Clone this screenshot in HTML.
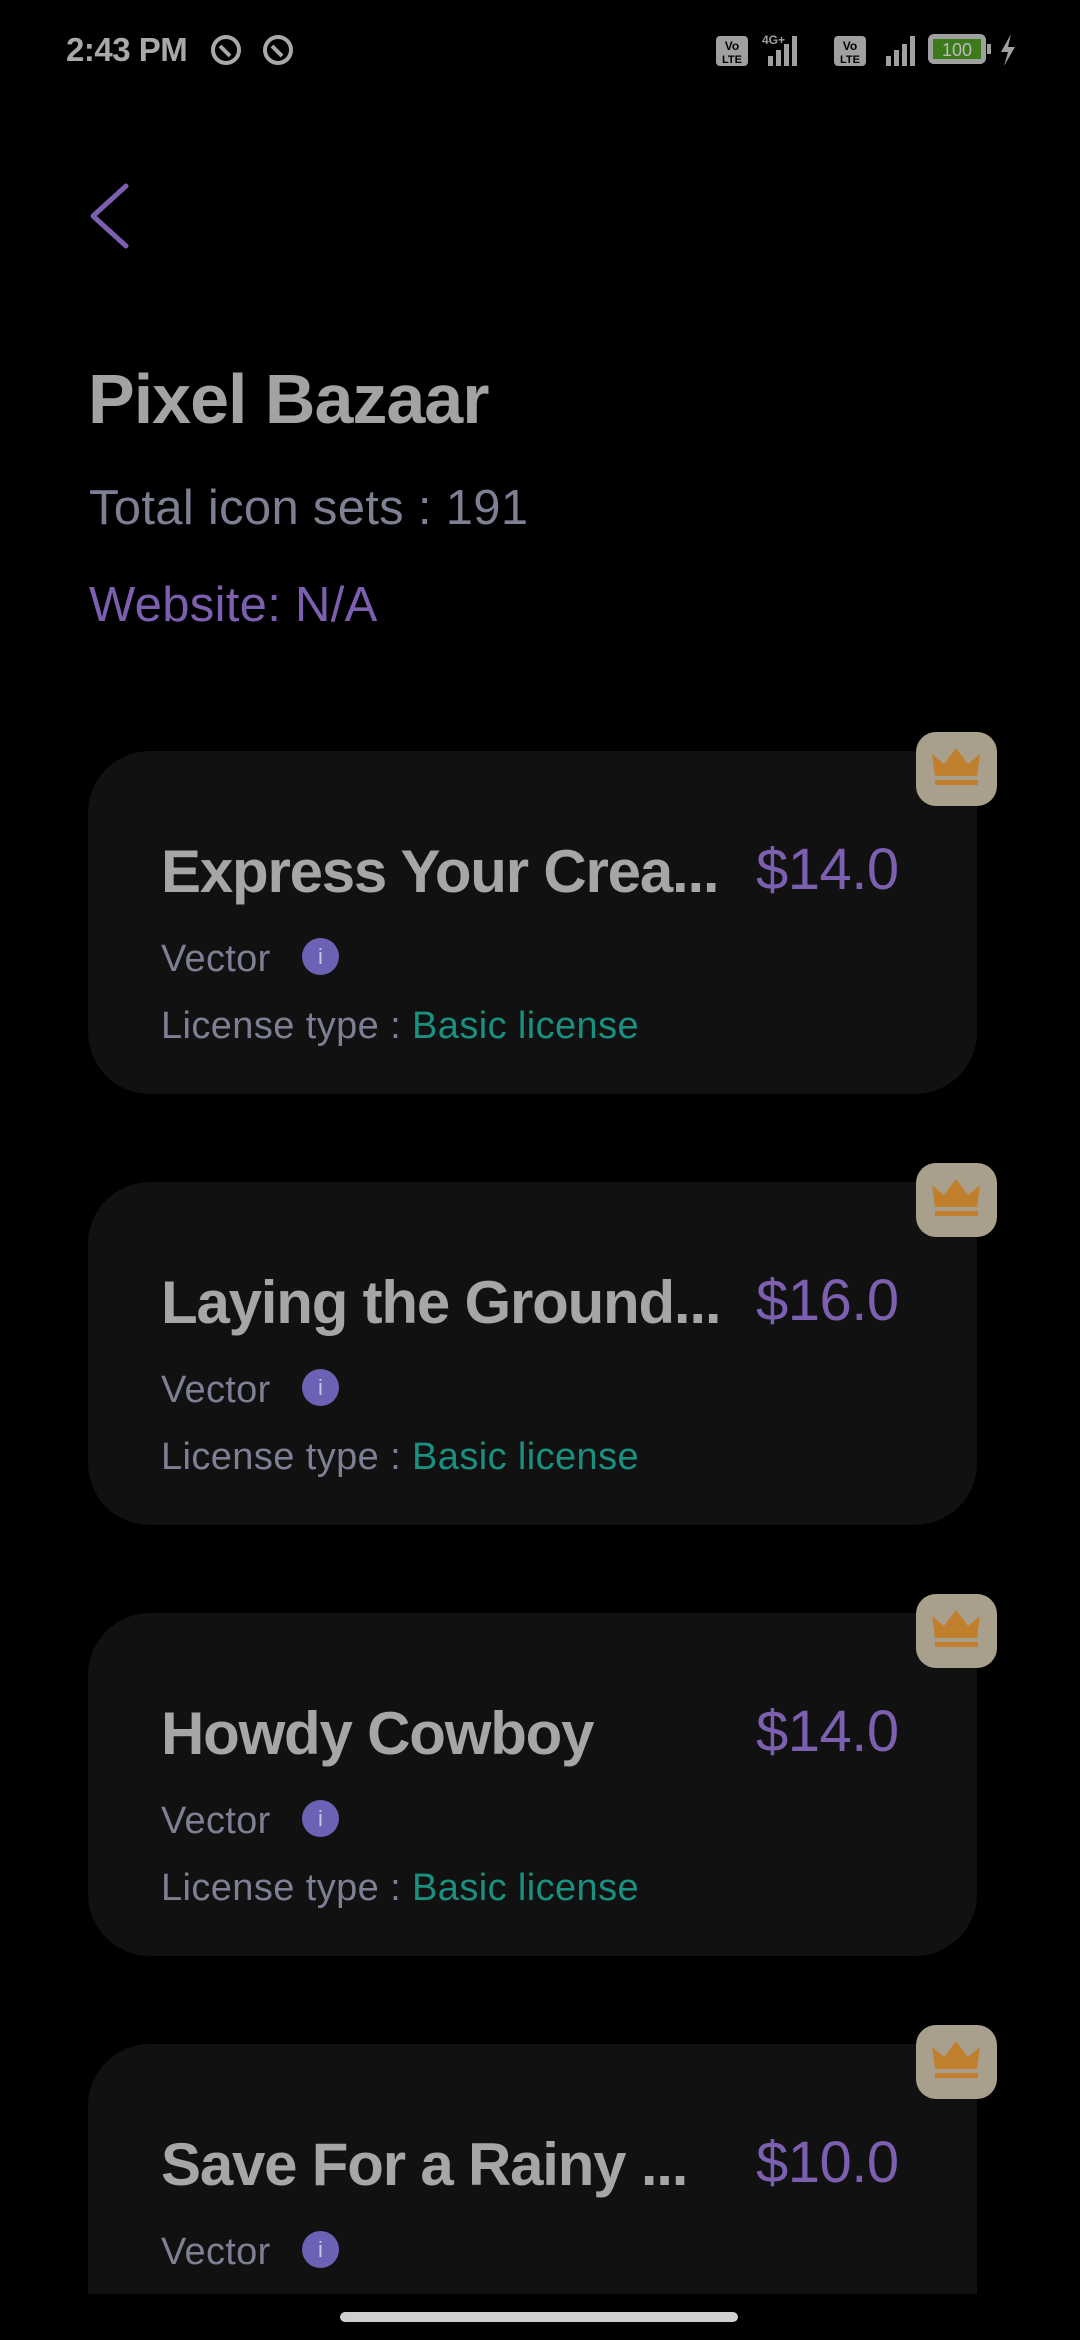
<!DOCTYPE html>
<html><head><meta charset="utf-8"><style>
*{margin:0;padding:0;box-sizing:border-box}
html,body{width:1080px;height:2340px;overflow:hidden}
body{background:#000;position:relative;font-family:"Liberation Sans",sans-serif}
.a{position:absolute;white-space:nowrap;line-height:1}
.card{position:absolute;left:88px;width:889px;height:343px;background:#111;border-radius:62px}
.crown{position:absolute;left:916px;width:81px;height:74px;background:#a89f8c;border-radius:20px}
.t{font-weight:bold;font-size:60px;color:#a6a6a6;left:161px;letter-spacing:-1.2px}
.p{font-size:58px;color:#7d5fb0;left:756px;letter-spacing:-0.5px}
.v{font-size:38px;color:#7d7f92;left:161px;letter-spacing:0.3px}
.i{position:absolute;left:302px;width:37px;height:37px;border-radius:50%;background:#6b61b5;color:#c9c6e6;font-size:22px;text-align:center;line-height:37px}
.l{font-size:38px;color:#7d7f92;left:161px;letter-spacing:0.4px}
.l span{color:#1a9081}
</style></head><body>
<div class="a" style="left:66px;top:33px;font-size:33px;font-weight:bold;color:#a8a8a8;letter-spacing:-0.5px">2:43 PM</div>
<svg class="a" style="left:206px;top:32px" width="90" height="36"><g fill="none" stroke="#a8a8a8" stroke-width="4"><circle cx="20" cy="18" r="13"/><circle cx="72" cy="18" r="13"/><path d="M14 14l10 10M66 14l10 10"/></g></svg>
<svg class="a" style="left:714px;top:30px" width="310" height="40"><g fill="#a0a0a0"><rect x="2" y="6" width="32" height="30" rx="4"/><rect x="120" y="6" width="32" height="30" rx="4"/>
<rect x="54" y="26" width="5" height="10"/><rect x="62" y="20" width="5" height="16"/><rect x="70" y="14" width="5" height="22"/><rect x="78" y="6" width="5" height="30"/>
<rect x="172" y="26" width="5" height="10"/><rect x="180" y="20" width="5" height="16"/><rect x="188" y="14" width="5" height="22"/><rect x="196" y="6" width="5" height="30"/>
<rect x="214" y="4" width="58" height="30" rx="6"/><rect x="273" y="14" width="4" height="10"/><path d="M297 4l-10 18h7l-4 14 11-19h-7z"/></g>
<rect x="219" y="9" width="48" height="20" fill="#3d7a1c"/><text x="243" y="26" font-size="18" fill="#bbb" text-anchor="middle" font-family="Liberation Sans">100</text>
<text x="18" y="20" font-size="12" fill="#000" text-anchor="middle" font-weight="bold">Vo</text><text x="18" y="33" font-size="11" fill="#000" text-anchor="middle" font-weight="bold">LTE</text>
<text x="136" y="20" font-size="12" fill="#000" text-anchor="middle" font-weight="bold">Vo</text><text x="136" y="33" font-size="11" fill="#000" text-anchor="middle" font-weight="bold">LTE</text>
<text x="48" y="14" font-size="12" fill="#a0a0a0" font-weight="bold">4G+</text></svg>
<svg class="a" style="left:84px;top:178px" width="50" height="76"><path d="M42 8L9 38l33 30" fill="none" stroke="#7d5fb0" stroke-width="5" stroke-linecap="round" stroke-linejoin="round"/></svg>
<div class="a" style="left:88px;top:364px;font-size:70px;font-weight:bold;color:#a3a3a3;letter-spacing:-1px">Pixel Bazaar</div>
<div class="a" style="left:89px;top:484px;font-size:49px;color:#7d7f92;letter-spacing:0.3px">Total icon sets : 191</div>
<div class="a" style="left:89px;top:581px;font-size:49px;color:#7d5fb0;letter-spacing:0.3px">Website: N/A</div>

<div class="card" style="top:751px"></div>
<div class="card" style="top:1182px"></div>
<div class="card" style="top:1613px"></div>
<div class="card" style="top:2044px;height:250px;border-radius:62px 62px 0 0"></div>

<div class="crown" style="top:732px"><svg width="81" height="74"><path d="M16 22l12 10 12-16 12 16 12-10-3 22H19z" fill="#c07f2c"/><rect x="19" y="48" width="43" height="5" fill="#c07f2c"/></svg></div>
<div class="a t" style="top:842px">Express Your Crea...</div><div class="a p" style="top:841px">$14.0</div>
<div class="a v" style="top:940px">Vector</div><div class="i" style="top:938px">i</div>
<div class="a l" style="top:1007px">License type : <span>Basic license</span></div>

<div class="crown" style="top:1163px"><svg width="81" height="74"><path d="M16 22l12 10 12-16 12 16 12-10-3 22H19z" fill="#c07f2c"/><rect x="19" y="48" width="43" height="5" fill="#c07f2c"/></svg></div>
<div class="a t" style="top:1273px">Laying the Ground...</div><div class="a p" style="top:1272px">$16.0</div>
<div class="a v" style="top:1371px">Vector</div><div class="i" style="top:1369px">i</div>
<div class="a l" style="top:1438px">License type : <span>Basic license</span></div>

<div class="crown" style="top:1594px"><svg width="81" height="74"><path d="M16 22l12 10 12-16 12 16 12-10-3 22H19z" fill="#c07f2c"/><rect x="19" y="48" width="43" height="5" fill="#c07f2c"/></svg></div>
<div class="a t" style="top:1704px">Howdy Cowboy</div><div class="a p" style="top:1703px">$14.0</div>
<div class="a v" style="top:1802px">Vector</div><div class="i" style="top:1800px">i</div>
<div class="a l" style="top:1869px">License type : <span>Basic license</span></div>

<div class="crown" style="top:2025px"><svg width="81" height="74"><path d="M16 22l12 10 12-16 12 16 12-10-3 22H19z" fill="#c07f2c"/><rect x="19" y="48" width="43" height="5" fill="#c07f2c"/></svg></div>
<div class="a t" style="top:2135px">Save For a Rainy ...</div><div class="a p" style="top:2134px">$10.0</div>
<div class="a v" style="top:2233px">Vector</div><div class="i" style="top:2231px">i</div>

<div style="position:absolute;left:340px;top:2312px;width:398px;height:10px;border-radius:5px;background:#cfcfcf"></div>
</body></html>
